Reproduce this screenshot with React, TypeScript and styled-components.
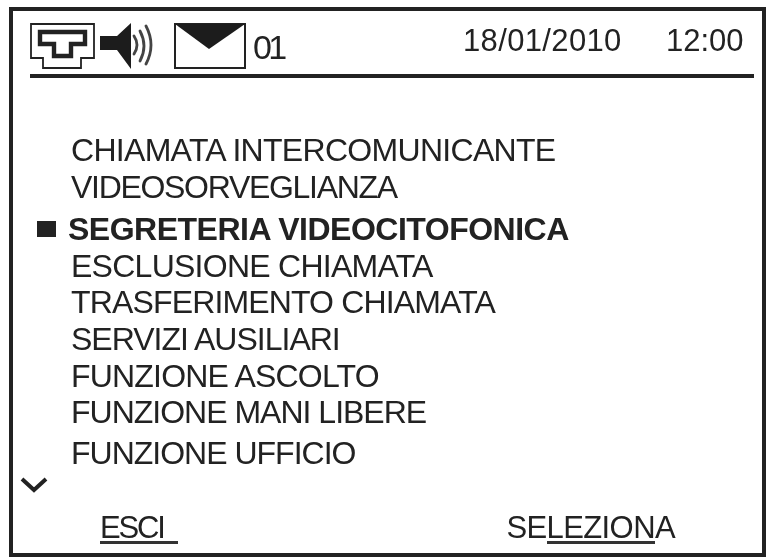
import React from 'react';
import styled, { createGlobalStyle } from 'styled-components';

const GlobalStyle = createGlobalStyle`
  html, body {
    margin: 0;
    padding: 0;
    background: #fff;
  }
`;

const menuItems = [
  { label: 'CHIAMATA INTERCOMUNICANTE', gap: 0, track: -0.7 },
  { label: 'VIDEOSORVEGLIANZA', gap: 0, track: -1.3 },
  { label: 'SEGRETERIA VIDEOCITOFONICA', gap: 6, track: -0.5, active: true },
  { label: 'ESCLUSIONE CHIAMATA', gap: 0, track: -0.74 },
  { label: 'TRASFERIMENTO CHIAMATA', gap: 0, track: -0.85 },
  { label: 'SERVIZI AUSILIARI', gap: 0, track: -1 },
  { label: 'FUNZIONE ASCOLTO', gap: 0, track: -0.8 },
  { label: 'FUNZIONE MANI LIBERE', gap: 0, track: -1 },
  { label: 'FUNZIONE UFFICIO', gap: 4, track: -1 },
];

const NetworkIcon = () => (
  <svg width="65" height="46" viewBox="0 0 65 46" fill="none" stroke="#222">
    <path d="M1 1H64V35H51V45H13V35H1Z" strokeWidth="1.8" />
    <path d="M10 9H55V21H41V33H24V21H10Z" strokeWidth="4.4" />
  </svg>
);

const SpeakerIcon = () => (
  <svg width="56" height="46" viewBox="0 0 56 46">
    <path d="M0 13H17L31 0V46L17 27H0Z" fill="#1c1c1c" />
    <g fill="none" stroke="#444" strokeWidth="2.8" strokeLinecap="round">
      <path d="M34 13Q40 22 34 31" />
      <path d="M40 8Q48 23 40 38" />
      <path d="M46 3Q56 22 46 41" />
    </g>
  </svg>
);

const EnvelopeIcon = () => (
  <svg width="72" height="46" viewBox="0 0 72 46">
    <rect x="1" y="1" width="70" height="44" fill="#fff" stroke="#222" strokeWidth="2" />
    <path d="M1 1H71L35 26Z" fill="#1c1c1c" />
  </svg>
);

const ChevronIcon = () => (
  <svg width="28" height="16" viewBox="0 0 28 16" fill="none">
    <path d="M2 2L14 13L26 2" stroke="#222" strokeWidth="4" />
  </svg>
);

const App: React.FC = () => {
  return (
    <>
      <GlobalStyle />
      <Screen>
        <StatusBar>
          <NetworkIcon />
          <Speaker>
            <SpeakerIcon />
          </Speaker>
          <EnvelopeIcon />
          <MessageCount>01</MessageCount>
          <DateText>18/01/2010</DateText>
          <TimeText>12:00</TimeText>
        </StatusBar>
        <Menu>
          {menuItems.map(item => (
            <MenuRow key={item.label} $gap={item.gap} $track={item.track} $active={item.active}>
              {item.active && <Bullet />}
              {item.label}
            </MenuRow>
          ))}
        </Menu>
        <More>
          <ChevronIcon />
        </More>
        <SoftKeys>
          <SoftKey $track={-2.2}>
            <Marked $wide>ESCI</Marked>
          </SoftKey>
          <SoftKey $track={-0.6}>
            SE<Marked>LEZION</Marked>A
          </SoftKey>
        </SoftKeys>
      </Screen>
    </>
  );
};

const Screen = styled.div`
  box-sizing: border-box;
  width: 757px;
  height: 550px;
  margin: 7px 0 0 9px;
  border: 4px solid #222;
  font-family: 'Liberation Sans', Arial, sans-serif;
  color: #222;
  background: #fff;
  display: flex;
  flex-direction: column;
  filter: blur(0.35px);
`;

const StatusBar = styled.div`
  box-sizing: border-box;
  width: 724px;
  height: 67px;
  margin-left: 17px;
  padding-top: 12px;
  border-bottom: 4px solid #222;
  display: flex;
  align-items: flex-start;
`;

const Speaker = styled.div`
  margin: 0 18px 0 5px;
`;

const MessageCount = styled.span`
  font-size: 34px;
  line-height: 46px;
  margin: 1px 0 0 7px;
  letter-spacing: -3.6px;
  width: 210px;
`;

const DateText = styled.span`
  font-size: 31px;
  line-height: 34px;
  margin-top: 1px;
  width: 204px;
  letter-spacing: 0.35px;
`;

const TimeText = styled.span`
  font-size: 31px;
  line-height: 34px;
  margin-top: 1px;
  margin-left: -1px;
`;

const Menu = styled.div`
  display: flex;
  flex-direction: column;
  margin-top: 54px;
  padding-left: 58px;
`;

const MenuRow = styled.div<{ $gap: number; $track: number; $active?: boolean }>`
  position: relative;
  font-size: 32px;
  line-height: 36.6px;
  height: 36.6px;
  letter-spacing: ${p => p.$track}px;
  white-space: nowrap;
  margin-top: ${p => p.$gap}px;
  font-weight: ${p => (p.$active ? 700 : 400)};
  margin-left: ${p => (p.$active ? -3 : 0)}px;
`;

const Bullet = styled.span`
  position: absolute;
  left: -31px;
  top: 10px;
  width: 19px;
  height: 16px;
  background: #222;
`;

const More = styled.div`
  height: 16px;
  margin: 6px 0 0 7px;
`;

const SoftKeys = styled.div`
  display: flex;
  justify-content: space-between;
  margin: 18px 0 0 87px;
  width: 575px;
  font-size: 31px;
  line-height: 34px;
`;

const SoftKey = styled.span<{ $track: number }>`
  letter-spacing: ${p => p.$track}px;
`;

const Marked = styled.span<{ $wide?: boolean }>`
  display: inline-block;
  border-bottom: 3px solid #333;
  line-height: 27px;
  padding-right: ${p => (p.$wide ? 14 : 0)}px;
`;

export default App;
